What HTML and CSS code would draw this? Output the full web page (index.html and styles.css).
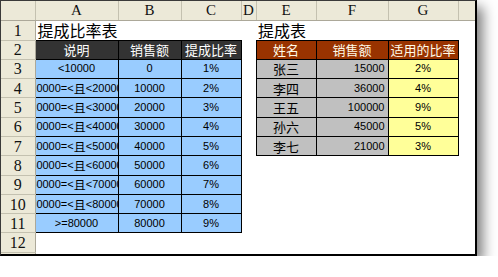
FILE: index.html
```html
<!doctype html>
<html lang="zh-CN">
  <head>
    <meta charset="UTF-8" />
    <title>提成比率表</title>
    <link rel="stylesheet" href="styles.css">
  </head>
  <body>
    <div class="sheet">
      <table class="grid">
        <colgroup>
          <col class="w-rh"><col class="w-a"><col class="w-b"><col class="w-c"><col class="w-d">
          <col class="w-e"><col class="w-f"><col class="w-g"><col class="w-h">
        </colgroup>
        <thead>
          <tr class="col-heads">
            <th></th><th>A</th><th>B</th><th>C</th><th>D</th><th>E</th><th>F</th><th>G</th><th></th>
          </tr>
        </thead>
        <tbody>
          <tr class="r-title">
            <th class="rh">1</th><td class="title">提成比率表</td><td></td><td></td><td></td>
            <td class="title">提成表</td><td></td><td></td><td></td>
          </tr>
          <tr>
            <th class="rh">2</th>
            <td class="dark">说明</td><td class="dark">销售额</td><td class="dark">提成比率</td><td></td>
            <td class="brown">姓名</td><td class="brown">销售额</td><td class="brown">适用的比率</td><td></td>
          </tr>
          <tr>
            <th class="rh">3</th>
            <td class="blue"><div class="clip num">&lt;10000</div></td><td class="blue num">0</td><td class="blue num">1%</td><td></td>
            <td class="grey">张三</td><td class="grey num right">15000</td><td class="yellow num">2%</td><td></td>
          </tr>
          <tr>
            <th class="rh">4</th>
            <td class="blue"><div class="clip num">10000=&lt;<span class="cjk">且</span>&lt;20000</div></td><td class="blue num">10000</td><td class="blue num">2%</td><td></td>
            <td class="grey">李四</td><td class="grey num right">36000</td><td class="yellow num">4%</td><td></td>
          </tr>
          <tr>
            <th class="rh">5</th>
            <td class="blue"><div class="clip num">20000=&lt;<span class="cjk">且</span>&lt;30000</div></td><td class="blue num">20000</td><td class="blue num">3%</td><td></td>
            <td class="grey">王五</td><td class="grey num right">100000</td><td class="yellow num">9%</td><td></td>
          </tr>
          <tr>
            <th class="rh">6</th>
            <td class="blue"><div class="clip num">30000=&lt;<span class="cjk">且</span>&lt;40000</div></td><td class="blue num">30000</td><td class="blue num">4%</td><td></td>
            <td class="grey">孙六</td><td class="grey num right">45000</td><td class="yellow num">5%</td><td></td>
          </tr>
          <tr>
            <th class="rh">7</th>
            <td class="blue"><div class="clip num">40000=&lt;<span class="cjk">且</span>&lt;50000</div></td><td class="blue num">40000</td><td class="blue num">5%</td><td></td>
            <td class="grey">李七</td><td class="grey num right">21000</td><td class="yellow num">3%</td><td></td>
          </tr>
          <tr>
            <th class="rh">8</th>
            <td class="blue"><div class="clip num">50000=&lt;<span class="cjk">且</span>&lt;60000</div></td><td class="blue num">50000</td><td class="blue num">6%</td>
            <td></td><td></td><td></td><td></td><td></td>
          </tr>
          <tr>
            <th class="rh">9</th>
            <td class="blue"><div class="clip num">60000=&lt;<span class="cjk">且</span>&lt;70000</div></td><td class="blue num">60000</td><td class="blue num">7%</td>
            <td></td><td></td><td></td><td></td><td></td>
          </tr>
          <tr>
            <th class="rh">10</th>
            <td class="blue"><div class="clip num">70000=&lt;<span class="cjk">且</span>&lt;80000</div></td><td class="blue num">70000</td><td class="blue num">8%</td>
            <td></td><td></td><td></td><td></td><td></td>
          </tr>
          <tr>
            <th class="rh">11</th>
            <td class="blue"><div class="clip num">&gt;=80000</div></td><td class="blue num">80000</td><td class="blue num">9%</td>
            <td></td><td></td><td></td><td></td><td></td>
          </tr>
          <tr>
            <th class="rh">12</th><td></td><td></td><td></td><td></td><td></td><td></td><td></td><td></td>
          </tr>
          <tr>
            <th class="rh">13</th><td></td><td></td><td></td><td></td><td></td><td></td><td></td><td></td>
          </tr>
        </tbody>
      </table>
    </div>
  </body>
</html>
```

FILE: styles.css
```css
* {
  box-sizing: border-box;
  margin: 0;
  padding: 0;
}

body {
  background: #fff;
  font-family: "Noto Sans CJK SC", sans-serif;
  color: #000;
}

/* worksheet window with its drop shadow */
.sheet {
  width: 477px;
  height: 256px;
  overflow: hidden;
  background: #fff;
  border-left: 1px solid #3a3a3a;
  border-top: 1px solid #3a3a3a;
  border-right: 2px solid #000;
  border-bottom: 2px solid #000;
  box-shadow: 6px 7px 12px rgba(0, 0, 0, 0.5);
}

.grid {
  border-collapse: collapse;
  table-layout: fixed;
  width: 474px;
}

.w-rh { width: 34px; }
.w-a { width: 83px; }
.w-b { width: 63px; }
.w-c { width: 60px; }
.w-d { width: 15px; }
.w-e { width: 60px; }
.w-f { width: 72px; }
.w-g { width: 70px; }
.w-h { width: 17px; }

.grid th,
.grid td {
  padding: 0;
  font-weight: normal;
  white-space: nowrap;
  overflow: hidden;
  text-align: center;
  vertical-align: middle;
  font-size: 13px;
  line-height: 17px;
}

.grid tbody tr {
  height: 19.3px;
}

.grid tbody tr.r-title {
  height: 20px;
}

/* column letters and row numbers */
.col-heads th {
  height: 19px;
  background: #ece9d8;
  border-right: 1px solid #c4c1b0;
  border-bottom: 1px solid #aca899;
  font-family: "Liberation Serif", serif;
  font-size: 15px;
  color: #111;
}

.grid .rh {
  background: #ece9d8;
  border-right: 1px solid #aca899;
  border-bottom: 1px solid #c4c1b0;
  font-family: "Liberation Serif", serif;
  font-size: 16px;
  color: #111;
}

.grid .title {
  overflow: visible;
  text-align: left;
  vertical-align: bottom;
  padding-left: 2px;
  font-size: 16px;
  line-height: 19px;
}

.grid .dark,
.grid .blue,
.grid .brown,
.grid .grey,
.grid .yellow {
  border: 1px solid #000;
}

.grid .dark {
  background: #333;
  color: #fff;
}

.grid .brown {
  background: #993300;
  color: #fffbe8;
}

.grid .blue { background: #99ccff; }
.grid .grey { background: #c0c0c0; }
.grid .yellow { background: #ffff99; }

.grid .num {
  font-family: "Liberation Sans", "Noto Sans CJK SC", sans-serif;
  font-size: 11px;
}

.grid .right {
  text-align: right;
  padding-right: 3px;
}

/* long range labels stay centred and are cut on both sides */
.clip {
  display: flex;
  justify-content: center;
  overflow: hidden;
  white-space: nowrap;
}

.clip .cjk {
  font-family: "Noto Sans CJK SC", sans-serif;
  font-size: 12px;
}
```
